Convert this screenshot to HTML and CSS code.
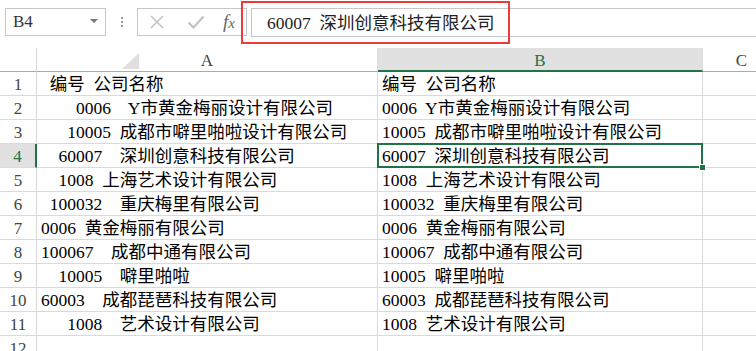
FILE: index.html
```html
<!DOCTYPE html>
<html lang="zh-CN">
<head>
    <meta charset="UTF-8">
    <title>Book1 - Excel</title>
    <link rel="stylesheet" href="styles.css">
</head>
<body>
    <div class="toolbar">
        <div class="namebox">
            <span class="ref">B4</span>
            <span class="caret"></span>
        </div>
        <div class="grip"><i></i><i></i><i></i></div>
        <div class="fxbtns">
            <svg class="btn" width="16" height="14" viewBox="0 0 16 14">
                <path d="M2 1 L14 13 M14 1 L2 13" stroke="#c3c3c3" stroke-width="1.6" fill="none"/>
            </svg>
            <svg class="btn" width="18" height="14" viewBox="0 0 18 14">
                <path d="M1.5 7.5 L6.5 12.5 L16.5 1.5" stroke="#c3c3c3" stroke-width="2.2" fill="none"/>
            </svg>
            <span class="fx">f<span class="x">x</span></span>
        </div>
        <div class="formula">60007 深圳创意科技有限公司</div>
        <div class="mark"></div>
    </div>

    <div class="sheet">
        <div class="cell corner">
            <svg width="17" height="16" viewBox="0 0 17 16"><polygon points="17,0 17,16 0,16" fill="#dfdfdf"/></svg>
        </div>
        <div class="cell colhead">A</div>
        <div class="cell colhead active-col">B</div>
        <div class="cell colhead">C</div>

        <div class="cell rowhead">1</div>
        <div class="cell"> 编号 公司名称</div>
        <div class="cell">编号 公司名称</div>
        <div class="cell"></div>

        <div class="cell rowhead">2</div>
        <div class="cell">    0006  Y市黄金梅丽设计有限公司</div>
        <div class="cell">0006 Y市黄金梅丽设计有限公司</div>
        <div class="cell"></div>

        <div class="cell rowhead">3</div>
        <div class="cell">   10005 成都市噼里啪啦设计有限公司</div>
        <div class="cell">10005 成都市噼里啪啦设计有限公司</div>
        <div class="cell"></div>

        <div class="cell rowhead active-row">4</div>
        <div class="cell">  60007  深圳创意科技有限公司</div>
        <div class="cell selected">60007 深圳创意科技有限公司<span class="handle"></span></div>
        <div class="cell"></div>

        <div class="cell rowhead">5</div>
        <div class="cell">  1008 上海艺术设计有限公司</div>
        <div class="cell">1008 上海艺术设计有限公司</div>
        <div class="cell"></div>

        <div class="cell rowhead">6</div>
        <div class="cell"> 100032  重庆梅里有限公司</div>
        <div class="cell">100032 重庆梅里有限公司</div>
        <div class="cell"></div>

        <div class="cell rowhead">7</div>
        <div class="cell">0006 黄金梅丽有限公司</div>
        <div class="cell">0006 黄金梅丽有限公司</div>
        <div class="cell"></div>

        <div class="cell rowhead">8</div>
        <div class="cell">100067  成都中通有限公司</div>
        <div class="cell">100067 成都中通有限公司</div>
        <div class="cell"></div>

        <div class="cell rowhead">9</div>
        <div class="cell">  10005  噼里啪啦</div>
        <div class="cell">10005 噼里啪啦</div>
        <div class="cell"></div>

        <div class="cell rowhead">10</div>
        <div class="cell">60003  成都琵琶科技有限公司</div>
        <div class="cell">60003 成都琵琶科技有限公司</div>
        <div class="cell"></div>

        <div class="cell rowhead">11</div>
        <div class="cell">   1008  艺术设计有限公司</div>
        <div class="cell">1008 艺术设计有限公司</div>
        <div class="cell"></div>

        <div class="cell rowhead">12</div>
        <div class="cell"></div>
        <div class="cell"></div>
        <div class="cell"></div>
    </div>
</body>
</html>
```

FILE: styles.css
```css
/* Page */
body {
    margin: 0;
    background: #fff;
    font-family: "Liberation Serif", "Noto Sans CJK SC", serif;
    font-size: 17.5px;
    color: #000;
    overflow: hidden;
}

/* Formula bar row */
.toolbar {
    position: relative;
    display: flex;
    align-items: flex-start;
    height: 48px;
    padding-top: 8px;
    box-sizing: border-box;
}

.namebox {
    display: flex;
    align-items: center;
    justify-content: space-between;
    margin-left: 5px;
    width: 101px;
    height: 28px;
    padding: 0 7px 0 7px;
    box-sizing: border-box;
    border: 1px solid #c6c6c6;
}

.ref {
    color: #333;
    font-size: 17px;
}

.caret {
    width: 0;
    height: 0;
    border-left: 4px solid transparent;
    border-right: 4px solid transparent;
    border-top: 4px solid #777;
    margin-bottom: 2px;
}

.grip {
    display: flex;
    flex-direction: column;
    align-items: center;
    gap: 2px;
    width: 31px;
    padding-top: 9px;
}

.grip i {
    display: block;
    width: 2px;
    height: 2px;
    background: #999;
}

.fxbtns {
    display: flex;
    align-items: center;
    width: 110px;
    height: 28px;
    box-sizing: border-box;
    border: 1px solid #c6c6c6;
    padding-left: 11px;
}

.fxbtns .btn {
    margin-right: 22px;
}

.fx {
    font-family: "Liberation Serif", serif;
    font-style: italic;
    font-size: 19px;
    color: #666;
    margin-left: -4px;
}

.fx .x {
    font-size: 15px;
}

.formula {
    flex: 1;
    margin-left: 4px;
    height: 29px;
    line-height: 28px;
    box-sizing: border-box;
    border: 1px solid #c6c6c6;
    border-right: none;
    padding-left: 15px;
    color: #222;
    word-spacing: 0.25em;
    white-space: pre;
}

/* red annotation box over the formula */
.mark {
    position: absolute;
    left: 241px;
    top: 1px;
    width: 269px;
    height: 43px;
    box-sizing: border-box;
    border: 2px solid #ee3a3a;
}

/* Grid */
.sheet {
    display: grid;
    grid-template-columns: 37px 341px 325px 78px;
    grid-auto-rows: 24px;
}

.cell {
    position: relative;
    box-sizing: border-box;
    border-right: 1px solid #dadada;
    border-bottom: 1px solid #dadada;
    padding: 1px 0 0 4px;
    line-height: 23px;
    white-space: pre;
    word-spacing: 0.25em;
}

.corner {
    border-bottom: 1px solid #ababab;
    padding: 5px 0 0 17px;
    line-height: 0;
}

.colhead {
    text-align: center;
    padding-left: 0;
    color: #444;
    font-size: 17px;
    border-bottom: 1px solid #ababab;
}

.rowhead {
    text-align: center;
    padding-left: 0;
    color: #444;
    font-size: 17px;
}

.active-col {
    background: #e1e1e1;
    color: #217346;
    border-bottom: 2px solid #217346;
}

.active-row {
    background: #e1e1e1;
    color: #217346;
    border-right: 2px solid #217346;
}

.selected::after {
    content: "";
    position: absolute;
    top: -1px;
    left: -1px;
    right: -1px;
    bottom: -1px;
    border: 2px solid #217346;
    z-index: 1;
}

.handle {
    position: absolute;
    right: -4px;
    bottom: -4px;
    width: 5px;
    height: 5px;
    background: #217346;
    border: 1px solid #fff;
    z-index: 2;
}
```
